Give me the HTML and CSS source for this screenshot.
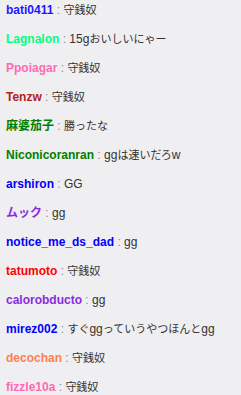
FILE: index.html
```html
<!DOCTYPE html>
<html lang="ja">
<head>
<meta charset="utf-8">
<link rel="stylesheet" href="styles.css">
</head>
<body>
<ul class="chat">
  <li class="line"><span class="from c-blue2">bati0411</span><span class="colon"> : </span><span class="msg">守銭奴</span></li>
  <li class="line"><span class="from c-spring">Lagnalon</span><span class="colon"> : </span><span class="msg"><span class="lat">15g</span>おいしいにゃー</span></li>
  <li class="line"><span class="from c-pink">Ppoiagar</span><span class="colon"> : </span><span class="msg">守銭奴</span></li>
  <li class="line"><span class="from c-brick">Tenzw</span><span class="colon"> : </span><span class="msg">守銭奴</span></li>
  <li class="line"><span class="from c-green">麻婆茄子</span><span class="colon"> : </span><span class="msg">勝ったな</span></li>
  <li class="line"><span class="from c-green">Niconicoranran</span><span class="colon"> : </span><span class="msg"><span class="lat">gg</span>は速いだろ<span class="lat">w</span></span></li>
  <li class="line"><span class="from c-blue">arshiron</span><span class="colon"> : </span><span class="msg"><span class="lat">GG</span></span></li>
  <li class="line"><span class="from c-violet">ムック</span><span class="colon"> : </span><span class="msg"><span class="lat">gg</span></span></li>
  <li class="line"><span class="from c-blue">notice_me_ds_dad</span><span class="colon"> : </span><span class="msg"><span class="lat">gg</span></span></li>
  <li class="line"><span class="from c-red">tatumoto</span><span class="colon"> : </span><span class="msg">守銭奴</span></li>
  <li class="line"><span class="from c-violet">calorobducto</span><span class="colon"> : </span><span class="msg"><span class="lat">gg</span></span></li>
  <li class="line"><span class="from c-blue">mirez002</span><span class="colon"> : </span><span class="msg">すぐ<span class="lat">gg</span>っていうやつほんと<span class="lat">gg</span></span></li>
  <li class="line"><span class="from c-coral">decochan</span><span class="colon"> : </span><span class="msg">守銭奴</span></li>
  <li class="line"><span class="from c-pink">fizzle10a</span><span class="colon"> : </span><span class="msg">守銭奴</span></li>
</ul>
</body>
</html>
```
FILE: styles.css
```css
html, body {
  margin: 0;
  padding: 0;
  background: #efeef1;
}
body {
  font-family: "Liberation Sans", Arial, "Noto Sans CJK JP", sans-serif;
  font-size: 12px;
  overflow: hidden;
}
.chat {
  list-style: none;
  margin: 0;
  padding: 0;
}
.line {
  padding: 1px 6px 9px;
  line-height: 19px;
  white-space: nowrap;
}
.from {
  font-weight: bold;
}
.colon {
  color: #8c8c9c;
}
.msg {
  color: #333333;
  font-size: 11px;
}
.lat {
  font-size: 12px;
}
.c-blue { color: #0000ff; }
.c-blue2 { color: #1a1aff; }
.c-spring { color: #00ff7f; }
.c-pink { color: #ff69b4; }
.c-brick { color: #b22222; }
.c-green { color: #008000; }
.c-violet { color: #8a2be2; }
.c-red { color: #ff0000; }
.c-coral { color: #ff7f50; }
```
